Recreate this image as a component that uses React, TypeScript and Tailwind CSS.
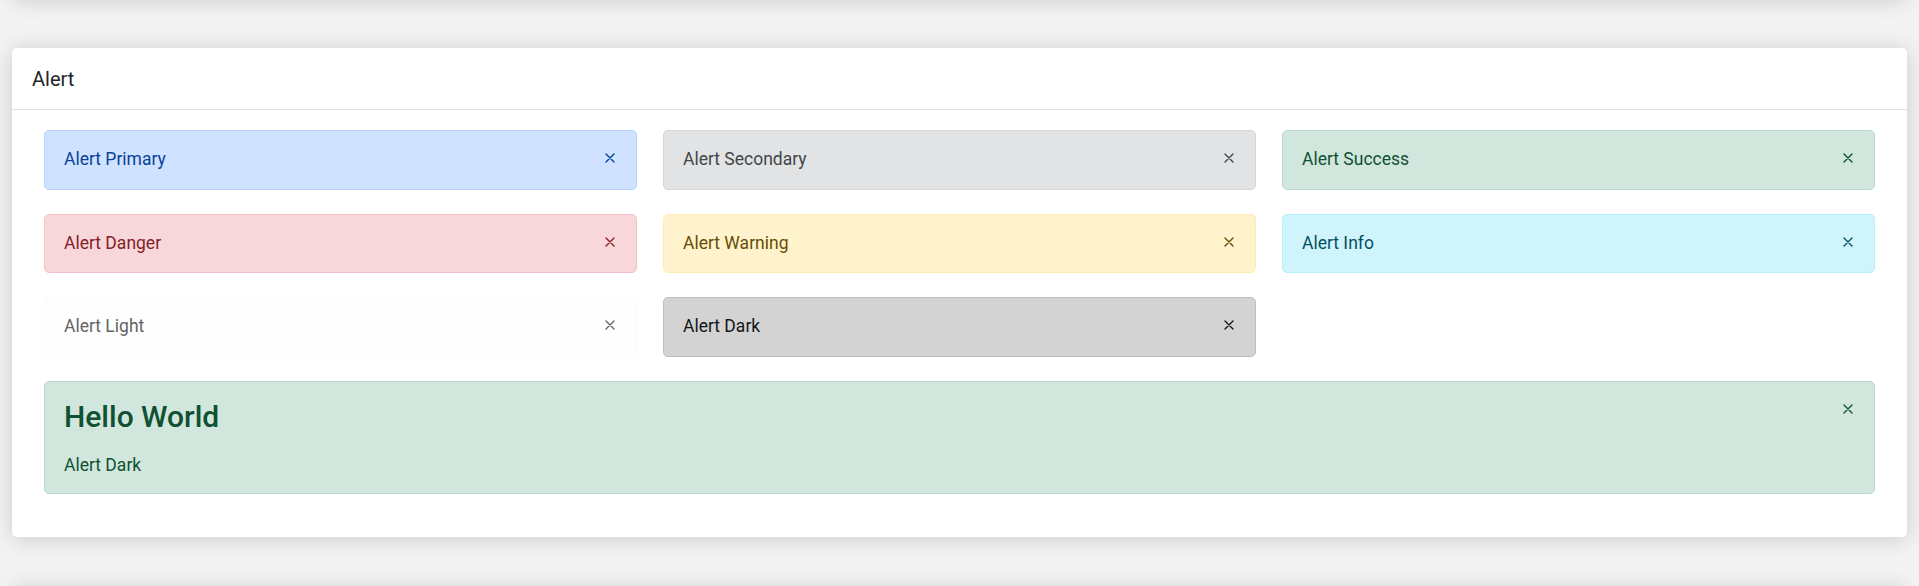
const alerts = [
  { label: "Alert Primary", box: "bg-[#cfe2ff] border-[#b6d4fe] text-[#084298]" },
  { label: "Alert Secondary", box: "bg-[#e2e3e5] border-[#d3d6d8] text-[#41464b]" },
  { label: "Alert Success", box: "bg-[#d1e7dd] border-[#badbcc] text-[#0f5132]" },
  { label: "Alert Danger", box: "bg-[#f8d7da] border-[#f5c2c7] text-[#842029]" },
  { label: "Alert Warning", box: "bg-[#fff3cd] border-[#ffecb5] text-[#664d03]" },
  { label: "Alert Info", box: "bg-[#cff4fc] border-[#b6effb] text-[#055160]" },
  { label: "Alert Light", box: "bg-[#fefefe] border-[#fbfbfc] text-[#636464]" },
  { label: "Alert Dark", box: "bg-[#d3d3d4] border-[#bcbebf] text-[#141619]" },
];

const CloseIcon = ({ top = "mt-[7px]" }: { top?: string }) => (
  <button type="button" className={`${top} flex w-[14px] shrink-0 justify-center`}>
    <svg width="10" height="10" viewBox="0 0 10 10" fill="none">
      <path
        d="M1 1L9 9M9 1L1 9"
        stroke="currentColor"
        strokeWidth="1.4"
        strokeLinecap="round"
      />
    </svg>
  </button>
);

const App = () => {
  return (
    <div className="h-screen overflow-hidden bg-[#f3f3f3] font-[Roboto,sans-serif]">
      <div className="-mt-[102px] flex flex-col gap-[50px] px-[12px]">
        <div className="h-[100px] rounded-[5px] bg-white shadow-[0_2px_22px_rgba(0,0,0,0.17)]" />

        <div className="rounded-[5px] bg-white shadow-[0_2px_22px_rgba(0,0,0,0.17)]">
          <div className="flex h-[62px] items-center border-b border-[#dee2e6] px-[20px]">
            <h3 className="text-[20px] leading-[30px] text-[#212529]">Alert</h3>
          </div>

          <div className="px-[32px] pt-[20px] pb-[43px]">
            <div className="grid grid-cols-3 gap-x-[26px] gap-y-[24px]">
              {alerts.map((a) => (
                <div
                  key={a.label}
                  className={`flex items-start justify-between rounded-[5px] border px-[19px] py-[15px] text-[17.5px] leading-[27.5px] ${a.box}`}
                >
                  <span>{a.label}</span>
                  <CloseIcon />
                </div>
              ))}

              <div className="col-span-3 flex items-start justify-between rounded-[5px] border border-[#badbcc] bg-[#d1e7dd] px-[19px] pt-[17.5px] pb-[14.5px] text-[#0f5132]">
                <div>
                  <h4 className="mb-[17px] text-[30px] leading-[36px] font-medium">
                    Hello World
                  </h4>
                  <p className="text-[17.5px] leading-[26px]">Alert Dark</p>
                </div>
                <CloseIcon top="mt-[4.5px]" />
              </div>
            </div>
          </div>
        </div>

        <div className="h-[100px] rounded-[5px] bg-white shadow-[0_2px_22px_rgba(0,0,0,0.17)]" />
      </div>
    </div>
  );
};

export default App;
